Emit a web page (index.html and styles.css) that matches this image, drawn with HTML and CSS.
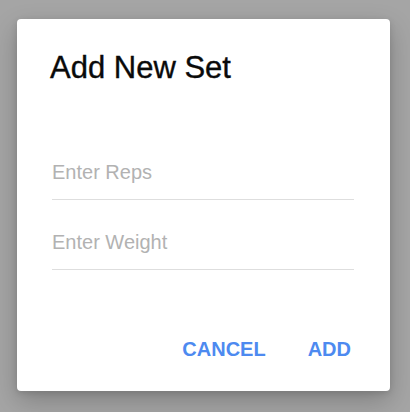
FILE: index.html
```html
<!DOCTYPE html>
<html lang="en">
<head>
<meta charset="utf-8">
<title>Add New Set</title>
<link rel="stylesheet" href="styles.css">
</head>
<body>
<div class="dialog">
  <h1 class="title">Add New Set</h1>
  <div class="fields">
    <input class="field" type="text" placeholder="Enter Reps">
    <input class="field" type="text" placeholder="Enter Weight">
  </div>
  <div class="actions">
    <button class="btn">CANCEL</button>
    <button class="btn">ADD</button>
  </div>
</div>
</body>
</html>
```
FILE: styles.css
```css
html, body {
  margin: 0;
  padding: 0;
}
body {
  width: 410px;
  height: 412px;
  background: #a5a5a5;
  font-family: "Liberation Sans", Arial, sans-serif;
  box-sizing: border-box;
  padding: 19px 20px 21px 17px;
}
.dialog {
  box-sizing: border-box;
  width: 373px;
  height: 372px;
  background: #ffffff;
  border-radius: 4px;
  box-shadow: 0 10px 26px rgba(0, 0, 0, 0.22), 0 2px 6px rgba(0, 0, 0, 0.12);
  padding: 32px 36px 30px 35px;
  display: flex;
  flex-direction: column;
}
.title {
  margin: 0;
  font-size: 31px;
  line-height: 34px;
  font-weight: normal;
  color: #0a0a0a;
  margin-left: -2px;
  -webkit-text-stroke: 0.35px #0a0a0a;
}
.fields {
  margin-top: 45px;
  display: flex;
  flex-direction: column;
}
.field {
  display: block;
  width: 100%;
  box-sizing: border-box;
  border: none;
  border-bottom: 1px solid #dedede;
  outline: none;
  padding: 30px 0 15px 0;
  margin: 0;
  font-family: inherit;
  font-size: 20px;
  line-height: 24px;
  height: 70px;
  color: #333;
  background: transparent;
}
.field::placeholder {
  color: #b2b2b2;
}
.actions {
  margin-top: auto;
  display: flex;
  justify-content: flex-end;
  gap: 42px;
  padding-right: 3px;
}
.btn {
  border: none;
  background: none;
  padding: 0;
  margin: 0;
  font-family: inherit;
  font-size: 20px;
  line-height: 24px;
  font-weight: bold;
  color: #4d8af0;
  cursor: pointer;
}
```
